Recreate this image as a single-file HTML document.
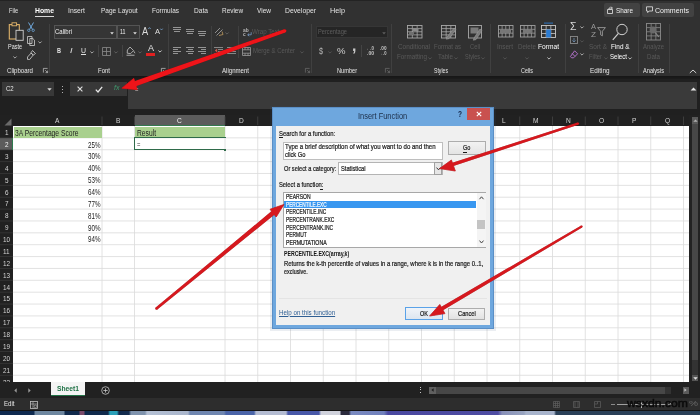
<!DOCTYPE html>
<html><head><meta charset="utf-8"><title>Insert Function</title>
<style>
html,body{margin:0;padding:0;background:#1c1c1c;}
#r{position:relative;width:700px;height:415px;overflow:hidden;font-family:"Liberation Sans",sans-serif;}
#r div{position:absolute;box-sizing:border-box;}
#r span{position:absolute;white-space:nowrap;transform-origin:0 50%;}
#r svg{position:absolute;overflow:visible;}
</style></head><body><div id="r">
<!-- s1_ribbon.py -->
<div style="left:0px;top:0px;width:700px;height:75.6px;background:#313131;"></div>
<div style="left:0px;top:75.6px;width:700px;height:40px;background:#202020;"></div>
<div style="left:0px;top:75.6px;width:700px;height:3px;background:linear-gradient(#161616,#1c1c1c);"></div>
<div style="left:0px;top:0px;width:700px;height:1.2px;background:#232323;"></div>
<span style="left:9px;top:5.90px;font-size:8px;line-height:9.2px;color:#e2e2e2;transform:scaleX(0.714);">File</span>
<span style="left:68px;top:5.90px;font-size:8px;line-height:9.2px;color:#e2e2e2;transform:scaleX(0.850);">Insert</span>
<span style="left:100.7px;top:5.90px;font-size:8px;line-height:9.2px;color:#e2e2e2;transform:scaleX(0.815);">Page Layout</span>
<span style="left:152px;top:5.90px;font-size:8px;line-height:9.2px;color:#e2e2e2;transform:scaleX(0.810);">Formulas</span>
<span style="left:194px;top:5.90px;font-size:8px;line-height:9.2px;color:#e2e2e2;transform:scaleX(0.828);">Data</span>
<span style="left:222px;top:5.90px;font-size:8px;line-height:9.2px;color:#e2e2e2;transform:scaleX(0.801);">Review</span>
<span style="left:257px;top:5.90px;font-size:8px;line-height:9.2px;color:#e2e2e2;transform:scaleX(0.814);">View</span>
<span style="left:285px;top:5.90px;font-size:8px;line-height:9.2px;color:#e2e2e2;transform:scaleX(0.850);">Developer</span>
<span style="left:330px;top:5.90px;font-size:8px;line-height:9.2px;color:#e2e2e2;transform:scaleX(0.912);">Help</span>
<span style="left:35px;top:5.90px;font-size:8px;line-height:9.2px;color:#ffffff;font-weight:bold;transform:scaleX(0.855);">Home</span>
<div style="left:35px;top:15.5px;width:19px;height:1.5px;background:#d8d8d8;"></div>
<div style="left:603.5px;top:2.5px;width:36px;height:14.5px;background:#424242;border-radius:2px;"></div>
<div style="left:642px;top:2.5px;width:52px;height:14.5px;background:#424242;border-radius:2px;"></div>
<span style="left:616px;top:5.70px;font-size:8px;line-height:9.2px;color:#f0f0f0;transform:scaleX(0.796);">Share</span>
<span style="left:655px;top:5.70px;font-size:8px;line-height:9.2px;color:#f0f0f0;transform:scaleX(0.879);">Comments</span>
<svg style="left:607px;top:6px" width="7" height="8" viewBox="0 0 7 8"><path d="M0.5 3.5h5v4h-5z M2 3.5v-1.5h3.2 M4 0.6l1.4 1.4-1.4 1.4" fill="none" stroke="#e6e6e6" stroke-width="0.8"/></svg>
<svg style="left:646px;top:6px" width="7" height="8" viewBox="0 0 7 8"><path d="M0.5 0.8h6v4.2h-3.4l-1.4 1.6v-1.6h-1.2z" fill="none" stroke="#e6e6e6" stroke-width="0.8"/></svg>
<div style="left:48.8px;top:24px;width:1px;height:49px;background:#404040;"></div>
<div style="left:167.5px;top:24px;width:1px;height:49px;background:#404040;"></div>
<div style="left:311px;top:24px;width:1px;height:49px;background:#404040;"></div>
<div style="left:391px;top:24px;width:1px;height:49px;background:#404040;"></div>
<div style="left:490px;top:24px;width:1px;height:49px;background:#404040;"></div>
<div style="left:564.5px;top:24px;width:1px;height:49px;background:#404040;"></div>
<div style="left:637.5px;top:24px;width:1px;height:49px;background:#404040;"></div>
<div style="left:669px;top:24px;width:1px;height:49px;background:#404040;"></div>
<div style="left:210.5px;top:26px;width:1px;height:32px;background:#404040;"></div>
<div style="left:238px;top:26px;width:1px;height:32px;background:#404040;"></div>
<span style="left:7px;top:66.59px;font-size:7.5px;line-height:8.62px;color:#e6e6e6;transform:scaleX(0.810);">Clipboard</span>
<span style="left:98px;top:66.59px;font-size:7.5px;line-height:8.62px;color:#e6e6e6;transform:scaleX(0.800);">Font</span>
<span style="left:222px;top:66.59px;font-size:7.5px;line-height:8.62px;color:#e6e6e6;transform:scaleX(0.810);">Alignment</span>
<span style="left:337px;top:66.59px;font-size:7.5px;line-height:8.62px;color:#e6e6e6;transform:scaleX(0.750);">Number</span>
<span style="left:433.9px;top:66.59px;font-size:7.5px;line-height:8.62px;color:#e6e6e6;transform:scaleX(0.685);">Styles</span>
<span style="left:521px;top:66.59px;font-size:7.5px;line-height:8.62px;color:#e6e6e6;transform:scaleX(0.720);">Cells</span>
<span style="left:590px;top:66.59px;font-size:7.5px;line-height:8.62px;color:#e6e6e6;transform:scaleX(0.850);">Editing</span>
<span style="left:643px;top:66.59px;font-size:7.5px;line-height:8.62px;color:#e6e6e6;transform:scaleX(0.752);">Analysis</span>
<svg style="left:42.5px;top:68.3px" width="5" height="5" viewBox="0 0 5 5"><path d="M0.4 4.6v-4.2h4.2 M2.2 2.2l2.2 2.2 M4.6 2.6v2h-2" fill="none" stroke="#c8c8c8" stroke-width="0.7"/></svg>
<svg style="left:160.5px;top:68.3px" width="5" height="5" viewBox="0 0 5 5"><path d="M0.4 4.6v-4.2h4.2 M2.2 2.2l2.2 2.2 M4.6 2.6v2h-2" fill="none" stroke="#c8c8c8" stroke-width="0.7"/></svg>
<svg style="left:304.5px;top:68.3px" width="5" height="5" viewBox="0 0 5 5"><path d="M0.4 4.6v-4.2h4.2 M2.2 2.2l2.2 2.2 M4.6 2.6v2h-2" fill="none" stroke="#707070" stroke-width="0.7"/></svg>
<svg style="left:384.5px;top:68.3px" width="5" height="5" viewBox="0 0 5 5"><path d="M0.4 4.6v-4.2h4.2 M2.2 2.2l2.2 2.2 M4.6 2.6v2h-2" fill="none" stroke="#707070" stroke-width="0.7"/></svg>
<svg style="left:689px;top:68.5px" width="8" height="5" viewBox="0 0 8 5"><path d="M0.8 4l3.2-3 3.2 3" fill="none" stroke="#d0d0d0" stroke-width="1"/></svg>
<svg style="left:8px;top:21px" width="17" height="21" viewBox="0 0 17 21"><rect x="1.3" y="3.6" width="10" height="14.4" fill="none" stroke="#e0b36a" stroke-width="1.1"/>
<rect x="4" y="1.8" width="4.6" height="3" fill="#313131" stroke="#e0b36a" stroke-width="0.9"/>
<rect x="8" y="9.3" width="7.2" height="10" fill="#313131" stroke="#cfcfcf" stroke-width="0.9"/></svg>
<span style="left:8px;top:43.49px;font-size:7.5px;line-height:8.62px;color:#e8e8e8;transform:scaleX(0.730);">Paste</span>
<svg style="left:13px;top:55.5px" width="4" height="3" viewBox="0 0 4 3"><path d="M0.4 0.5l1.6 1.6 1.6-1.6" fill="none" stroke="#c8c8c8" stroke-width="0.8"/></svg>
<svg style="left:27px;top:22px" width="8" height="10" viewBox="0 0 8 10"><path d="M1.5 0.5l4 7 M6.5 0.5l-4 7" stroke="#6fa8dc" stroke-width="1" fill="none"/><circle cx="1.8" cy="8.3" r="1.2" fill="none" stroke="#6fa8dc" stroke-width="0.8"/><circle cx="6.2" cy="8.3" r="1.2" fill="none" stroke="#6fa8dc" stroke-width="0.8"/></svg>
<svg style="left:27px;top:36px" width="9" height="10" viewBox="0 0 9 10"><path d="M0.5 0.5h4.5v7h-4.5z M2.8 2.5h3l1.7 1.7v5.3h-4.7z" fill="#313131" stroke="#d0d0d0" stroke-width="0.8"/></svg>
<svg style="left:38px;top:40.5px" width="4" height="3" viewBox="0 0 4 3"><path d="M0.4 0.5l1.6 1.6 1.6-1.6" fill="none" stroke="#c8c8c8" stroke-width="0.8"/></svg>
<svg style="left:27px;top:50px" width="9" height="10" viewBox="0 0 9 10"><path d="M5.5 0.5l3 3-2.2 1.6-2.3-2.3z M4.2 3l2 2-3.4 4.4h-2.3v-2.4z" fill="none" stroke="#d0d0d0" stroke-width="0.8"/></svg>
<div style="left:53.5px;top:25px;width:63px;height:13.5px;background:#353535;border:1px solid #545454;"></div>
<div style="left:117px;top:25px;width:22.5px;height:13.5px;background:#353535;border:1px solid #545454;"></div>
<span style="left:55px;top:27.89px;font-size:7.5px;line-height:8.62px;color:#f0f0f0;transform:scaleX(0.800);">Calibri</span>
<span style="left:120px;top:27.69px;font-size:7.5px;line-height:8.62px;color:#f0f0f0;transform:scaleX(0.706);">11</span>
<svg style="left:110px;top:31.5px" width="4" height="3" viewBox="0 0 4 3"><path d="M0.2 0.3h3.6l-1.8 2.2z" fill="#e0e0e0"/></svg>
<svg style="left:133px;top:31.5px" width="4" height="3" viewBox="0 0 4 3"><path d="M0.2 0.3h3.6l-1.8 2.2z" fill="#e0e0e0"/></svg>
<span style="left:142.3px;top:25.16px;font-size:10.5px;line-height:12.07px;color:#dcdcdc;transform:scaleX(0.885);">A</span>
<svg style="left:148px;top:27px" width="3" height="3" viewBox="0 0 3 3"><path d="M0.3 2l1.2-1.4 1.2 1.4" fill="none" stroke="#7fb2e5" stroke-width="0.7"/></svg>
<span style="left:154.5px;top:27.40px;font-size:8px;line-height:9.2px;color:#e0e0e0;transform:scaleX(0.937);">A</span>
<svg style="left:159.5px;top:27.5px" width="3" height="3" viewBox="0 0 3 3"><path d="M0.3 0.6l1.2 1.4 1.2-1.4" fill="none" stroke="#7fb2e5" stroke-width="0.7"/></svg>
<span style="left:56.5px;top:46.69px;font-size:7.5px;line-height:8.62px;color:#e0e0e0;font-weight:bold;transform:scaleX(0.738);">B</span>
<span style="left:69.5px;top:46.69px;font-size:7.5px;line-height:8.62px;color:#e0e0e0;transform:scaleX(1.200);font-style:italic;">I</span>
<span style="left:80.5px;top:46.69px;font-size:7.5px;line-height:8.62px;color:#e0e0e0;transform:scaleX(0.923);text-decoration:underline;">U</span>
<svg style="left:90px;top:50.5px" width="4" height="3" viewBox="0 0 4 3"><path d="M0.4 0.5l1.6 1.6 1.6-1.6" fill="none" stroke="#c8c8c8" stroke-width="0.8"/></svg>
<div style="left:97.5px;top:45px;width:1px;height:12px;background:#444;"></div>
<svg style="left:102px;top:46.5px" width="9" height="9" viewBox="0 0 9 9"><path d="M0.5 0.5h8v8h-8z M4.5 0.5v8 M0.5 4.5h8" fill="none" stroke="#8a8a8a" stroke-width="0.8"/></svg>
<svg style="left:114px;top:50.5px" width="4" height="3" viewBox="0 0 4 3"><path d="M0.4 0.5l1.6 1.6 1.6-1.6" fill="none" stroke="#6a6a6a" stroke-width="0.8"/></svg>
<div style="left:121.5px;top:45px;width:1px;height:12px;background:#444;"></div>
<svg style="left:125.5px;top:45.5px" width="10" height="10" viewBox="0 0 10 10"><path d="M4 1l3.6 3.6-3 3-3.4-0.4 0.2-3.2z M7.8 5.2l1.2 2" fill="none" stroke="#c8c8c8" stroke-width="0.8"/><rect x="0.5" y="8.6" width="8" height="1.4" fill="#8a8a8a"/></svg>
<svg style="left:138px;top:50.5px" width="4" height="3" viewBox="0 0 4 3"><path d="M0.4 0.5l1.6 1.6 1.6-1.6" fill="none" stroke="#6a6a6a" stroke-width="0.8"/></svg>
<span style="left:147.6px;top:43.91px;font-size:8.5px;line-height:9.77px;color:#e6e6e6;transform:scaleX(1.058);">A</span>
<div style="left:146.2px;top:53.3px;width:8.8px;height:2.4px;background:#e02020;"></div>
<svg style="left:157.5px;top:50.3px" width="4" height="3" viewBox="0 0 4 3"><path d="M0.4 0.5l1.6 1.6 1.6-1.6" fill="none" stroke="#f0f0f0" stroke-width="0.8"/></svg>
<div style="left:173.0px;top:27px;width:8px;height:0.9px;background:#949494;"></div>
<div style="left:173.0px;top:29px;width:8px;height:0.9px;background:#949494;"></div>
<div style="left:174.0px;top:31px;width:6px;height:0.9px;background:#949494;"></div>
<div style="left:186.0px;top:28.5px;width:8px;height:0.9px;background:#949494;"></div>
<div style="left:186.0px;top:30.5px;width:8px;height:0.9px;background:#949494;"></div>
<div style="left:187.0px;top:32.5px;width:6px;height:0.9px;background:#949494;"></div>
<div style="left:198.0px;top:30.8px;width:8px;height:0.9px;background:#949494;"></div>
<div style="left:198.0px;top:32.8px;width:8px;height:0.9px;background:#949494;"></div>
<div style="left:199.0px;top:34.8px;width:6px;height:0.9px;background:#949494;"></div>
<div style="left:173.0px;top:46.5px;width:8px;height:0.9px;background:#949494;"></div>
<div style="left:173.0px;top:48.5px;width:5px;height:0.9px;background:#949494;"></div>
<div style="left:173.0px;top:50.5px;width:8px;height:0.9px;background:#949494;"></div>
<div style="left:173.0px;top:52.5px;width:5px;height:0.9px;background:#949494;"></div>
<div style="left:186.0px;top:46.5px;width:8px;height:0.9px;background:#949494;"></div>
<div style="left:187.5px;top:48.5px;width:5px;height:0.9px;background:#949494;"></div>
<div style="left:186.0px;top:50.5px;width:8px;height:0.9px;background:#949494;"></div>
<div style="left:187.5px;top:52.5px;width:5px;height:0.9px;background:#949494;"></div>
<div style="left:198.0px;top:46.5px;width:8px;height:0.9px;background:#949494;"></div>
<div style="left:201.0px;top:48.5px;width:5px;height:0.9px;background:#949494;"></div>
<div style="left:198.0px;top:50.5px;width:8px;height:0.9px;background:#949494;"></div>
<div style="left:201.0px;top:52.5px;width:5px;height:0.9px;background:#949494;"></div>
<svg style="left:213.5px;top:26.5px" width="10" height="10" viewBox="0 0 10 10"><path d="M1 6l5-5 M2.5 8.5l6-6" stroke="#9a9a9a" stroke-width="0.9" fill="none"/><path d="M5 8.5l4-1-1 -3" stroke="#b0905a" stroke-width="0.9" fill="none"/></svg>
<svg style="left:224.5px;top:31.5px" width="4" height="3" viewBox="0 0 4 3"><path d="M0.4 0.5l1.6 1.6 1.6-1.6" fill="none" stroke="#6a6a6a" stroke-width="0.8"/></svg>
<div style="left:214.0px;top:46.5px;width:9px;height:0.9px;background:#868686;"></div>
<div style="left:218.0px;top:48.5px;width:5px;height:0.9px;background:#868686;"></div>
<div style="left:218.0px;top:50.5px;width:5px;height:0.9px;background:#868686;"></div>
<div style="left:214.0px;top:52.5px;width:9px;height:0.9px;background:#868686;"></div>
<div style="left:226.5px;top:46.5px;width:9px;height:0.9px;background:#868686;"></div>
<div style="left:230.5px;top:48.5px;width:5px;height:0.9px;background:#868686;"></div>
<div style="left:230.5px;top:50.5px;width:5px;height:0.9px;background:#868686;"></div>
<div style="left:226.5px;top:52.5px;width:9px;height:0.9px;background:#868686;"></div>
<svg style="left:213.5px;top:48px" width="4" height="5" viewBox="0 0 4 5"><path d="M3.2 0.6l-2.4 1.9 2.4 1.9z" fill="#c85a4a"/></svg>
<svg style="left:226px;top:48px" width="4" height="5" viewBox="0 0 4 5"><path d="M0.8 0.6l2.4 1.9-2.4 1.9z" fill="#c85a4a"/></svg>
<span style="left:243.3px;top:26.61px;font-size:5.2px;line-height:5.98px;color:#b4b4b4;font-weight:bold;transform:scaleX(0.939);">ab</span>
<span style="left:243.3px;top:31.21px;font-size:5.2px;line-height:5.98px;color:#b4b4b4;font-weight:bold;transform:scaleX(0.934);">c</span>
<svg style="left:246.5px;top:31.5px" width="5" height="5" viewBox="0 0 5 5"><path d="M4.2 0.2v2.6h-3.4 M2.2 1.4l-1.5 1.4 1.5 1.4" stroke="#7fa8d8" stroke-width="0.7" fill="none"/></svg>
<span style="left:252.4px;top:27.69px;font-size:7.5px;line-height:8.62px;color:#595959;transform:scaleX(0.824);">Wrap Text</span>
<svg style="left:242px;top:46.5px" width="9" height="9" viewBox="0 0 9 9"><path d="M0.5 0.5h8v8h-8z M0.5 2.8h8 M0.5 6.2h8 M3 0.5v2.3 M6 0.5v2.3 M3 6.2v2.3 M6 6.2v2.3" stroke="#9a9a9a" stroke-width="0.8" fill="none"/></svg>
<span style="left:253px;top:47.19px;font-size:7.5px;line-height:8.62px;color:#595959;transform:scaleX(0.793);">Merge &amp; Center</span>
<svg style="left:300px;top:51px" width="4" height="3" viewBox="0 0 4 3"><path d="M0.4 0.5l1.6 1.6 1.6-1.6" fill="none" stroke="#5a5a5a" stroke-width="0.8"/></svg>
<div style="left:316px;top:25.5px;width:71.5px;height:12.5px;background:#252525;border:1px solid #363636;"></div>
<span style="left:318px;top:27.89px;font-size:7.5px;line-height:8.62px;color:#5e5e5e;transform:scaleX(0.756);">Percentage</span>
<svg style="left:381.5px;top:31.5px" width="4" height="3" viewBox="0 0 4 3"><path d="M0.2 0.3h3.6l-1.8 2.2z" fill="#5e5e5e"/></svg>
<span style="left:319.2px;top:45.83px;font-size:9px;line-height:10.35px;color:#b8b8b8;transform:scaleX(0.799);">$</span>
<svg style="left:328px;top:51px" width="4" height="3" viewBox="0 0 4 3"><path d="M0.4 0.5l1.6 1.6 1.6-1.6" fill="none" stroke="#5a5a5a" stroke-width="0.8"/></svg>
<span style="left:337px;top:45.54px;font-size:9.5px;line-height:10.92px;color:#d0d0d0;transform:scaleX(1.006);">%</span>
<span style="left:351.6px;top:36.43px;font-size:17px;line-height:19.55px;color:#c8c8c8;font-weight:bold;transform:scaleX(0.932);">,</span>
<div style="left:360.5px;top:45px;width:1px;height:12px;background:#444;"></div>
<span style="left:365.5px;top:45.95px;font-size:4.6px;line-height:5.29px;color:#c8c8c8;font-weight:bold;transform:scaleX(0.948);">←.0</span>
<span style="left:366.5px;top:50.55px;font-size:4.6px;line-height:5.29px;color:#c8c8c8;font-weight:bold;transform:scaleX(1.095);">.00</span>
<span style="left:379.5px;top:45.95px;font-size:4.6px;line-height:5.29px;color:#c8c8c8;font-weight:bold;transform:scaleX(1.016);">.00</span>
<span style="left:378.5px;top:50.55px;font-size:4.6px;line-height:5.29px;color:#c8c8c8;font-weight:bold;transform:scaleX(0.889);">→.0</span>
<svg style="left:406.5px;top:24.5px" width="15.5" height="13.5" viewBox="0 0 15.5 13.5"><rect x="0.5" y="0.5" width="14.5" height="12.5" fill="none" stroke="#a8a8a8" stroke-width="0.9"/><path d="M5.33 0.5v12.5" stroke="#a8a8a8" stroke-width="0.8"/><path d="M10.17 0.5v12.5" stroke="#a8a8a8" stroke-width="0.8"/><path d="M0.5 3.62h14.5" stroke="#a8a8a8" stroke-width="0.8"/><path d="M0.5 6.75h14.5" stroke="#a8a8a8" stroke-width="0.8"/><path d="M0.5 9.88h14.5" stroke="#a8a8a8" stroke-width="0.8"/><rect x="5.5" y="3" width="6" height="3" fill="#8a8a8a"/><rect x="2" y="7" width="5" height="3" fill="#707070"/></svg>
<span style="left:398px;top:42.69px;font-size:7.5px;line-height:8.62px;color:#595959;transform:scaleX(0.853);">Conditional</span>
<span style="left:397px;top:52.69px;font-size:7.5px;line-height:8.62px;color:#595959;transform:scaleX(0.837);">Formatting</span>
<svg style="left:428px;top:56.5px" width="4" height="3" viewBox="0 0 4 3"><path d="M0.4 0.5l1.6 1.6 1.6-1.6" fill="none" stroke="#5a5a5a" stroke-width="0.8"/></svg>
<svg style="left:440.5px;top:24.5px" width="15" height="13.5" viewBox="0 0 15 13.5"><rect x="0.5" y="0.5" width="14" height="12.5" fill="none" stroke="#a8a8a8" stroke-width="0.9"/><path d="M5.17 0.5v12.5" stroke="#a8a8a8" stroke-width="0.8"/><path d="M9.83 0.5v12.5" stroke="#a8a8a8" stroke-width="0.8"/><path d="M0.5 3.62h14" stroke="#a8a8a8" stroke-width="0.8"/><path d="M0.5 6.75h14" stroke="#a8a8a8" stroke-width="0.8"/><path d="M0.5 9.88h14" stroke="#a8a8a8" stroke-width="0.8"/><path d="M6 12l7-9 2 1.6-7 9-2.6 0.6z" fill="#7a7a7a" stroke="#a0a0a0" stroke-width="0.6"/></svg>
<span style="left:434px;top:42.69px;font-size:7.5px;line-height:8.62px;color:#595959;transform:scaleX(0.800);">Format as</span>
<span style="left:438px;top:52.69px;font-size:7.5px;line-height:8.62px;color:#595959;transform:scaleX(0.837);">Table</span>
<svg style="left:454px;top:56.5px" width="4" height="3" viewBox="0 0 4 3"><path d="M0.4 0.5l1.6 1.6 1.6-1.6" fill="none" stroke="#5a5a5a" stroke-width="0.8"/></svg>
<svg style="left:468px;top:24.5px" width="14" height="13.5" viewBox="0 0 14 13.5"><rect x="0.5" y="0.5" width="13" height="12.5" fill="none" stroke="#a8a8a8" stroke-width="0.9"/><rect x="2.5" y="2.5" width="8" height="6" fill="#7a7a7a"/><path d="M6 13l6-9 2 1.6-6 9-2.6 0.6z" fill="#7a7a7a" stroke="#a0a0a0" stroke-width="0.6"/></svg>
<span style="left:470px;top:42.69px;font-size:7.5px;line-height:8.62px;color:#595959;transform:scaleX(0.774);">Cell</span>
<span style="left:465px;top:52.69px;font-size:7.5px;line-height:8.62px;color:#595959;transform:scaleX(0.734);">Styles</span>
<svg style="left:481px;top:56.5px" width="4" height="3" viewBox="0 0 4 3"><path d="M0.4 0.5l1.6 1.6 1.6-1.6" fill="none" stroke="#5a5a5a" stroke-width="0.8"/></svg>
<svg style="left:497.5px;top:25px" width="15.5" height="12.5" viewBox="0 0 15.5 12.5"><rect x="0.5" y="0.5" width="14.5" height="11.5" fill="none" stroke="#a0a0a0" stroke-width="0.9"/><path d="M4.12 0.5v11.5" stroke="#a0a0a0" stroke-width="0.8"/><path d="M7.75 0.5v11.5" stroke="#a0a0a0" stroke-width="0.8"/><path d="M11.38 0.5v11.5" stroke="#a0a0a0" stroke-width="0.8"/><path d="M0.5 4.33h14.5" stroke="#a0a0a0" stroke-width="0.8"/><path d="M0.5 8.17h14.5" stroke="#a0a0a0" stroke-width="0.8"/><rect x="2" y="4.5" width="11" height="3.6" fill="#777"/></svg>
<span style="left:497px;top:42.69px;font-size:7.5px;line-height:8.62px;color:#595959;transform:scaleX(0.853);">Insert</span>
<svg style="left:503px;top:56.5px" width="4" height="3" viewBox="0 0 4 3"><path d="M0.4 0.5l1.6 1.6 1.6-1.6" fill="none" stroke="#5a5a5a" stroke-width="0.8"/></svg>
<svg style="left:519.5px;top:25px" width="15.5" height="12.5" viewBox="0 0 15.5 12.5"><rect x="0.5" y="0.5" width="14.5" height="11.5" fill="none" stroke="#a0a0a0" stroke-width="0.9"/><path d="M4.12 0.5v11.5" stroke="#a0a0a0" stroke-width="0.8"/><path d="M7.75 0.5v11.5" stroke="#a0a0a0" stroke-width="0.8"/><path d="M11.38 0.5v11.5" stroke="#a0a0a0" stroke-width="0.8"/><path d="M0.5 4.33h14.5" stroke="#a0a0a0" stroke-width="0.8"/><path d="M0.5 8.17h14.5" stroke="#a0a0a0" stroke-width="0.8"/><rect x="3" y="4.5" width="9.5" height="3.6" fill="#777"/></svg>
<span style="left:518px;top:42.69px;font-size:7.5px;line-height:8.62px;color:#595959;transform:scaleX(0.830);">Delete</span>
<svg style="left:525px;top:56.5px" width="4" height="3" viewBox="0 0 4 3"><path d="M0.4 0.5l1.6 1.6 1.6-1.6" fill="none" stroke="#5a5a5a" stroke-width="0.8"/></svg>
<svg style="left:541.3px;top:24.5px" width="15" height="13" viewBox="0 0 15 13"><rect x="0.5" y="0.5" width="14" height="12" fill="none" stroke="#c8c8c8" stroke-width="0.9"/><path d="M5.17 0.5v12" stroke="#c8c8c8" stroke-width="0.8"/><path d="M9.83 0.5v12" stroke="#c8c8c8" stroke-width="0.8"/><path d="M0.5 4.50h14" stroke="#c8c8c8" stroke-width="0.8"/><path d="M0.5 8.50h14" stroke="#c8c8c8" stroke-width="0.8"/><rect x="5.2" y="4.5" width="4.7" height="8" fill="#2b7cd3"/><path d="M3 -1.9h9" stroke="#2b7cd3" stroke-width="0.9"/></svg>
<span style="left:538px;top:42.69px;font-size:7.5px;line-height:8.62px;color:#ffffff;transform:scaleX(0.884);">Format</span>
<svg style="left:546.5px;top:56.5px" width="4" height="3" viewBox="0 0 4 3"><path d="M0.4 0.5l1.6 1.6 1.6-1.6" fill="none" stroke="#e0e0e0" stroke-width="0.8"/></svg>
<span style="left:570px;top:20.75px;font-size:10px;line-height:11.5px;color:#d8d8d8;transform:scaleX(1.051);">Σ</span>
<svg style="left:580px;top:25.5px" width="4" height="3" viewBox="0 0 4 3"><path d="M0.4 0.5l1.6 1.6 1.6-1.6" fill="none" stroke="#c8c8c8" stroke-width="0.8"/></svg>
<svg style="left:569.5px;top:36px" width="8" height="8" viewBox="0 0 8 8"><rect x="0.5" y="0.5" width="7" height="7" fill="none" stroke="#8a8a8a" stroke-width="0.9"/><path d="M4 2v4 M2.4 4.4l1.6 1.6 1.6-1.6" stroke="#6f8fb0" stroke-width="0.8" fill="none"/></svg>
<svg style="left:580px;top:39.5px" width="4" height="3" viewBox="0 0 4 3"><path d="M0.4 0.5l1.6 1.6 1.6-1.6" fill="none" stroke="#5a5a5a" stroke-width="0.8"/></svg>
<svg style="left:569.5px;top:49.5px" width="8" height="8" viewBox="0 0 8 8"><path d="M4.6 0.8l3 3-4 4h-2l-1.2-1.2z M2 3.4l3 3" fill="none" stroke="#b070c8" stroke-width="1"/></svg>
<svg style="left:580px;top:53px" width="4" height="3" viewBox="0 0 4 3"><path d="M0.4 0.5l1.6 1.6 1.6-1.6" fill="none" stroke="#c8c8c8" stroke-width="0.8"/></svg>
<span style="left:590.5px;top:23.48px;font-size:7px;line-height:8.05px;color:#9a9a9a;transform:scaleX(1.071);">A</span>
<span style="left:590.5px;top:30.98px;font-size:7px;line-height:8.05px;color:#9a9a9a;transform:scaleX(1.169);">Z</span>
<svg style="left:596.5px;top:26.5px" width="9" height="10" viewBox="0 0 9 10"><path d="M0.6 0.6h7.8l-3 3.6v4.6l-1.8-1v-3.6z" fill="none" stroke="#9a9a9a" stroke-width="0.9"/></svg>
<span style="left:589px;top:42.69px;font-size:7.5px;line-height:8.62px;color:#595959;transform:scaleX(0.864);">Sort &amp;</span>
<span style="left:589px;top:52.69px;font-size:7.5px;line-height:8.62px;color:#595959;transform:scaleX(0.780);">Filter</span>
<svg style="left:604px;top:56.5px" width="4" height="3" viewBox="0 0 4 3"><path d="M0.4 0.5l1.6 1.6 1.6-1.6" fill="none" stroke="#5a5a5a" stroke-width="0.8"/></svg>
<svg style="left:612px;top:22.5px" width="16" height="18" viewBox="0 0 16 18"><circle cx="10" cy="6.5" r="5.2" fill="none" stroke="#d0d0d0" stroke-width="1"/><path d="M6.4 10.4l-5.6 6.4" stroke="#d0d0d0" stroke-width="1.2"/></svg>
<span style="left:611px;top:42.69px;font-size:7.5px;line-height:8.62px;color:#ffffff;transform:scaleX(0.853);">Find &amp;</span>
<span style="left:610px;top:52.69px;font-size:7.5px;line-height:8.62px;color:#ffffff;transform:scaleX(0.816);">Select</span>
<svg style="left:628px;top:56.5px" width="4" height="3" viewBox="0 0 4 3"><path d="M0.4 0.5l1.6 1.6 1.6-1.6" fill="none" stroke="#e0e0e0" stroke-width="0.8"/></svg>
<svg style="left:645.5px;top:23px" width="15" height="17.5" viewBox="0 0 15 17.5"><rect x="0.5" y="0.5" width="14" height="16.5" fill="none" stroke="#8a8a8a" stroke-width="0.9"/><path d="M5.17 0.5v16.5" stroke="#8a8a8a" stroke-width="0.8"/><path d="M9.83 0.5v16.5" stroke="#8a8a8a" stroke-width="0.8"/><path d="M0.5 4.62h14" stroke="#8a8a8a" stroke-width="0.8"/><path d="M0.5 8.75h14" stroke="#8a8a8a" stroke-width="0.8"/><path d="M0.5 12.88h14" stroke="#8a8a8a" stroke-width="0.8"/><circle cx="7" cy="7" r="3.4" fill="#6a6a6a"/><path d="M9.4 9.6l3.4 4.4" stroke="#8a8a8a" stroke-width="1.1"/></svg>
<span style="left:643px;top:42.69px;font-size:7.5px;line-height:8.62px;color:#595959;transform:scaleX(0.787);">Analyze</span>
<span style="left:647px;top:52.69px;font-size:7.5px;line-height:8.62px;color:#595959;transform:scaleX(0.821);">Data</span>
<!-- s2_formula.py -->
<div style="left:2.2px;top:81.8px;width:52.3px;height:14.6px;background:#383838;"></div>
<span style="left:6.3px;top:85.49px;font-size:7.5px;line-height:8.62px;color:#e8e8e8;transform:scaleX(0.803);">C2</span>
<svg style="left:46.5px;top:87.5px" width="5" height="3" viewBox="0 0 5 3"><path d="M0.3 0.3h4.4l-2.2 2.4z" fill="#d8d8d8"/></svg>
<div style="left:61.5px;top:85.5px;width:1px;height:1px;background:#b0b0b0;"></div>
<div style="left:61.5px;top:88.5px;width:1px;height:1px;background:#b0b0b0;"></div>
<div style="left:61.5px;top:91.5px;width:1px;height:1px;background:#b0b0b0;"></div>
<div style="left:70.3px;top:81.8px;width:56.7px;height:14.6px;background:#383838;"></div>
<svg style="left:77px;top:86px" width="6" height="6" viewBox="0 0 6 6"><path d="M0.6 0.6l4.8 4.8 M5.4 0.6l-4.8 4.8" stroke="#e0e0e0" stroke-width="1.1" fill="none"/></svg>
<svg style="left:95px;top:85.5px" width="8" height="7" viewBox="0 0 8 7"><path d="M0.8 3.6l2.2 2.4 4.2-5.2" stroke="#e8e8e8" stroke-width="1.3" fill="none"/></svg>
<span style="left:113.5px;top:84.19px;font-size:7.5px;line-height:8.62px;color:#3f9b6e;transform:scaleX(0.943);font-style:italic;font-family:"Liberation Serif",serif;">fx</span>
<div style="left:128px;top:81.6px;width:569px;height:27.2px;background:#3a3a3a;"></div>
<svg style="left:689.5px;top:86.5px" width="7" height="4" viewBox="0 0 7 4"><path d="M0.6 3.6l2.9-3 2.9 3z" fill="#e8e8e8"/></svg>
<span style="left:135px;top:85.89px;font-size:7.5px;line-height:8.62px;color:#d8d8d8;transform:scaleX(0.776);">=</span>
<!-- s3_grid.py -->
<div style="left:0px;top:115px;width:700px;height:11px;background:#212121;"></div>
<div style="left:0px;top:126px;width:13px;height:256px;background:#212121;"></div>
<svg style="left:4px;top:117.5px" width="8" height="8" viewBox="0 0 8 8"><path d="M7.5 0.5v7h-7z" fill="#6a6a6a"/></svg>
<div style="left:13px;top:126px;width:676px;height:256px;background:#ffffff;"></div>
<div style="left:134.5px;top:115px;width:90.5px;height:11px;background:#5c5c5c;"></div>
<div style="left:0px;top:137.87px;width:13px;height:11.87px;background:#5c5c5c;"></div>
<svg style="left:0px;top:0px" width="700" height="415" viewBox="0 0 700 415"><path d="M102 126V382" stroke="#dadada" stroke-width="0.8"/><path d="M102 116.5V125" stroke="#454545" stroke-width="0.8"/><path d="M134.5 126V382" stroke="#dadada" stroke-width="0.8"/><path d="M134.5 116.5V125" stroke="#454545" stroke-width="0.8"/><path d="M225 126V382" stroke="#dadada" stroke-width="0.8"/><path d="M225 116.5V125" stroke="#454545" stroke-width="0.8"/><path d="M257.75 126V382" stroke="#dadada" stroke-width="0.8"/><path d="M257.75 116.5V125" stroke="#454545" stroke-width="0.8"/><path d="M290.5 126V382" stroke="#dadada" stroke-width="0.8"/><path d="M290.5 116.5V125" stroke="#454545" stroke-width="0.8"/><path d="M323.25 126V382" stroke="#dadada" stroke-width="0.8"/><path d="M323.25 116.5V125" stroke="#454545" stroke-width="0.8"/><path d="M356.0 126V382" stroke="#dadada" stroke-width="0.8"/><path d="M356.0 116.5V125" stroke="#454545" stroke-width="0.8"/><path d="M388.75 126V382" stroke="#dadada" stroke-width="0.8"/><path d="M388.75 116.5V125" stroke="#454545" stroke-width="0.8"/><path d="M421.5 126V382" stroke="#dadada" stroke-width="0.8"/><path d="M421.5 116.5V125" stroke="#454545" stroke-width="0.8"/><path d="M454.25 126V382" stroke="#dadada" stroke-width="0.8"/><path d="M454.25 116.5V125" stroke="#454545" stroke-width="0.8"/><path d="M487.0 126V382" stroke="#dadada" stroke-width="0.8"/><path d="M487.0 116.5V125" stroke="#454545" stroke-width="0.8"/><path d="M519.75 126V382" stroke="#dadada" stroke-width="0.8"/><path d="M519.75 116.5V125" stroke="#454545" stroke-width="0.8"/><path d="M552.5 126V382" stroke="#dadada" stroke-width="0.8"/><path d="M552.5 116.5V125" stroke="#454545" stroke-width="0.8"/><path d="M585.25 126V382" stroke="#dadada" stroke-width="0.8"/><path d="M585.25 116.5V125" stroke="#454545" stroke-width="0.8"/><path d="M618.0 126V382" stroke="#dadada" stroke-width="0.8"/><path d="M618.0 116.5V125" stroke="#454545" stroke-width="0.8"/><path d="M650.75 126V382" stroke="#dadada" stroke-width="0.8"/><path d="M650.75 116.5V125" stroke="#454545" stroke-width="0.8"/><path d="M683.5 126V382" stroke="#dadada" stroke-width="0.8"/><path d="M683.5 116.5V125" stroke="#454545" stroke-width="0.8"/><path d="M13 137.87H689" stroke="#dadada" stroke-width="0.8"/><path d="M0 137.87H13" stroke="#3c3c3c" stroke-width="0.7"/><path d="M13 149.74H689" stroke="#dadada" stroke-width="0.8"/><path d="M0 149.74H13" stroke="#3c3c3c" stroke-width="0.7"/><path d="M13 161.61H689" stroke="#dadada" stroke-width="0.8"/><path d="M0 161.61H13" stroke="#3c3c3c" stroke-width="0.7"/><path d="M13 173.48H689" stroke="#dadada" stroke-width="0.8"/><path d="M0 173.48H13" stroke="#3c3c3c" stroke-width="0.7"/><path d="M13 185.35H689" stroke="#dadada" stroke-width="0.8"/><path d="M0 185.35H13" stroke="#3c3c3c" stroke-width="0.7"/><path d="M13 197.22H689" stroke="#dadada" stroke-width="0.8"/><path d="M0 197.22H13" stroke="#3c3c3c" stroke-width="0.7"/><path d="M13 209.09H689" stroke="#dadada" stroke-width="0.8"/><path d="M0 209.09H13" stroke="#3c3c3c" stroke-width="0.7"/><path d="M13 220.96H689" stroke="#dadada" stroke-width="0.8"/><path d="M0 220.96H13" stroke="#3c3c3c" stroke-width="0.7"/><path d="M13 232.83H689" stroke="#dadada" stroke-width="0.8"/><path d="M0 232.83H13" stroke="#3c3c3c" stroke-width="0.7"/><path d="M13 244.70H689" stroke="#dadada" stroke-width="0.8"/><path d="M0 244.70H13" stroke="#3c3c3c" stroke-width="0.7"/><path d="M13 256.57H689" stroke="#dadada" stroke-width="0.8"/><path d="M0 256.57H13" stroke="#3c3c3c" stroke-width="0.7"/><path d="M13 268.44H689" stroke="#dadada" stroke-width="0.8"/><path d="M0 268.44H13" stroke="#3c3c3c" stroke-width="0.7"/><path d="M13 280.31H689" stroke="#dadada" stroke-width="0.8"/><path d="M0 280.31H13" stroke="#3c3c3c" stroke-width="0.7"/><path d="M13 292.18H689" stroke="#dadada" stroke-width="0.8"/><path d="M0 292.18H13" stroke="#3c3c3c" stroke-width="0.7"/><path d="M13 304.05H689" stroke="#dadada" stroke-width="0.8"/><path d="M0 304.05H13" stroke="#3c3c3c" stroke-width="0.7"/><path d="M13 315.92H689" stroke="#dadada" stroke-width="0.8"/><path d="M0 315.92H13" stroke="#3c3c3c" stroke-width="0.7"/><path d="M13 327.79H689" stroke="#dadada" stroke-width="0.8"/><path d="M0 327.79H13" stroke="#3c3c3c" stroke-width="0.7"/><path d="M13 339.66H689" stroke="#dadada" stroke-width="0.8"/><path d="M0 339.66H13" stroke="#3c3c3c" stroke-width="0.7"/><path d="M13 351.53H689" stroke="#dadada" stroke-width="0.8"/><path d="M0 351.53H13" stroke="#3c3c3c" stroke-width="0.7"/><path d="M13 363.40H689" stroke="#dadada" stroke-width="0.8"/><path d="M0 363.40H13" stroke="#3c3c3c" stroke-width="0.7"/><path d="M13 375.27H689" stroke="#dadada" stroke-width="0.8"/><path d="M0 375.27H13" stroke="#3c3c3c" stroke-width="0.7"/></svg>
<span style="left:55.298796875px;top:117.09px;font-size:7.5px;line-height:8.62px;color:#d4d4d4;transform:scaleX(0.880);">A</span>
<span style="left:116.048796875px;top:117.09px;font-size:7.5px;line-height:8.62px;color:#d4d4d4;transform:scaleX(0.880);">B</span>
<span style="left:177.36678125px;top:117.09px;font-size:7.5px;line-height:8.62px;color:#f4f4f4;transform:scaleX(0.880);">C</span>
<span style="left:238.99178125px;top:117.09px;font-size:7.5px;line-height:8.62px;color:#d4d4d4;transform:scaleX(0.880);">D</span>
<span style="left:271.923796875px;top:117.09px;font-size:7.5px;line-height:8.62px;color:#d4d4d4;transform:scaleX(0.880);">E</span>
<span style="left:304.8591640625px;top:117.09px;font-size:7.5px;line-height:8.62px;color:#d4d4d4;transform:scaleX(0.880);">F</span>
<span style="left:337.05821875px;top:117.09px;font-size:7.5px;line-height:8.62px;color:#d4d4d4;transform:scaleX(0.880);">G</span>
<span style="left:369.99178125px;top:117.09px;font-size:7.5px;line-height:8.62px;color:#d4d4d4;transform:scaleX(0.880);">H</span>
<span style="left:404.20821875px;top:117.09px;font-size:7.5px;line-height:8.62px;color:#d4d4d4;transform:scaleX(0.880);">I</span>
<span style="left:436.225px;top:117.09px;font-size:7.5px;line-height:8.62px;color:#d4d4d4;transform:scaleX(0.880);">J</span>
<span style="left:468.423796875px;top:117.09px;font-size:7.5px;line-height:8.62px;color:#d4d4d4;transform:scaleX(0.880);">K</span>
<span style="left:501.5396328125px;top:117.09px;font-size:7.5px;line-height:8.62px;color:#d4d4d4;transform:scaleX(0.880);">L</span>
<span style="left:533.3759453125px;top:117.09px;font-size:7.5px;line-height:8.62px;color:#d4d4d4;transform:scaleX(0.880);">M</span>
<span style="left:566.49178125px;top:117.09px;font-size:7.5px;line-height:8.62px;color:#d4d4d4;transform:scaleX(0.880);">N</span>
<span style="left:599.05821875px;top:117.09px;font-size:7.5px;line-height:8.62px;color:#d4d4d4;transform:scaleX(0.880);">O</span>
<span style="left:632.173796875px;top:117.09px;font-size:7.5px;line-height:8.62px;color:#d4d4d4;transform:scaleX(0.880);">P</span>
<span style="left:664.55821875px;top:117.09px;font-size:7.5px;line-height:8.62px;color:#d4d4d4;transform:scaleX(0.880);">Q</span>
<span style="left:4.727202148437501px;top:129.22px;font-size:7.5px;line-height:8.62px;color:#d4d4d4;transform:scaleX(0.850);">1</span>
<span style="left:4.727202148437501px;top:141.09px;font-size:7.5px;line-height:8.62px;color:#f4f4f4;transform:scaleX(0.850);">2</span>
<span style="left:4.727202148437501px;top:152.97px;font-size:7.5px;line-height:8.62px;color:#d4d4d4;transform:scaleX(0.850);">3</span>
<span style="left:4.727202148437501px;top:164.83px;font-size:7.5px;line-height:8.62px;color:#d4d4d4;transform:scaleX(0.850);">4</span>
<span style="left:4.727202148437501px;top:176.70px;font-size:7.5px;line-height:8.62px;color:#d4d4d4;transform:scaleX(0.850);">5</span>
<span style="left:4.727202148437501px;top:188.57px;font-size:7.5px;line-height:8.62px;color:#d4d4d4;transform:scaleX(0.850);">6</span>
<span style="left:4.727202148437501px;top:200.44px;font-size:7.5px;line-height:8.62px;color:#d4d4d4;transform:scaleX(0.850);">7</span>
<span style="left:4.727202148437501px;top:212.31px;font-size:7.5px;line-height:8.62px;color:#d4d4d4;transform:scaleX(0.850);">8</span>
<span style="left:4.727202148437501px;top:224.18px;font-size:7.5px;line-height:8.62px;color:#d4d4d4;transform:scaleX(0.850);">9</span>
<span style="left:2.9544042968750004px;top:236.05px;font-size:7.5px;line-height:8.62px;color:#d4d4d4;transform:scaleX(0.850);">10</span>
<span style="left:3.1909765625px;top:247.92px;font-size:7.5px;line-height:8.62px;color:#d4d4d4;transform:scaleX(0.850);">11</span>
<span style="left:2.9544042968750004px;top:259.80px;font-size:7.5px;line-height:8.62px;color:#d4d4d4;transform:scaleX(0.850);">12</span>
<span style="left:2.9544042968750004px;top:271.67px;font-size:7.5px;line-height:8.62px;color:#d4d4d4;transform:scaleX(0.850);">13</span>
<span style="left:2.9544042968750004px;top:283.54px;font-size:7.5px;line-height:8.62px;color:#d4d4d4;transform:scaleX(0.850);">14</span>
<span style="left:2.9544042968750004px;top:295.41px;font-size:7.5px;line-height:8.62px;color:#d4d4d4;transform:scaleX(0.850);">15</span>
<span style="left:2.9544042968750004px;top:307.28px;font-size:7.5px;line-height:8.62px;color:#d4d4d4;transform:scaleX(0.850);">16</span>
<span style="left:2.9544042968750004px;top:319.15px;font-size:7.5px;line-height:8.62px;color:#d4d4d4;transform:scaleX(0.850);">17</span>
<span style="left:2.9544042968750004px;top:331.02px;font-size:7.5px;line-height:8.62px;color:#d4d4d4;transform:scaleX(0.850);">18</span>
<span style="left:2.9544042968750004px;top:342.89px;font-size:7.5px;line-height:8.62px;color:#d4d4d4;transform:scaleX(0.850);">19</span>
<span style="left:2.9544042968750004px;top:354.75px;font-size:7.5px;line-height:8.62px;color:#d4d4d4;transform:scaleX(0.850);">20</span>
<span style="left:2.9544042968750004px;top:366.62px;font-size:7.5px;line-height:8.62px;color:#d4d4d4;transform:scaleX(0.850);">21</span>
<span style="left:2.9544042968750004px;top:378.50px;font-size:7.5px;line-height:8.62px;color:#d4d4d4;transform:scaleX(0.850);">22</span>
<div style="left:134.5px;top:124.6px;width:90.5px;height:1.8px;background:#35794f;"></div>
<div style="left:12px;top:137.87px;width:1.2px;height:11.87px;background:#2e7a4e;"></div>
<div style="left:13.5px;top:126.5px;width:88.5px;height:11.069999999999999px;background:#a9d08e;"></div>
<div style="left:135px;top:126.5px;width:90px;height:11.069999999999999px;background:#a9d08e;"></div>
<span style="left:15px;top:128.66px;font-size:8.3px;line-height:9.54px;color:#1e1e1e;transform:scaleX(0.810);">3A Percentage Score</span>
<span style="left:137px;top:128.66px;font-size:8.3px;line-height:9.54px;color:#1e1e1e;transform:scaleX(0.808);">Result</span>
<span style="left:88px;top:140.53px;font-size:8.3px;line-height:9.54px;color:#222222;transform:scaleX(0.752);">25%</span>
<span style="left:88px;top:152.41px;font-size:8.3px;line-height:9.54px;color:#222222;transform:scaleX(0.752);">30%</span>
<span style="left:88px;top:164.27px;font-size:8.3px;line-height:9.54px;color:#222222;transform:scaleX(0.752);">40%</span>
<span style="left:88px;top:176.14px;font-size:8.3px;line-height:9.54px;color:#222222;transform:scaleX(0.752);">53%</span>
<span style="left:88px;top:188.01px;font-size:8.3px;line-height:9.54px;color:#222222;transform:scaleX(0.752);">64%</span>
<span style="left:88px;top:199.88px;font-size:8.3px;line-height:9.54px;color:#222222;transform:scaleX(0.752);">77%</span>
<span style="left:88px;top:211.75px;font-size:8.3px;line-height:9.54px;color:#222222;transform:scaleX(0.752);">81%</span>
<span style="left:88px;top:223.62px;font-size:8.3px;line-height:9.54px;color:#222222;transform:scaleX(0.752);">90%</span>
<span style="left:88px;top:235.49px;font-size:8.3px;line-height:9.54px;color:#222222;transform:scaleX(0.752);">94%</span>
<div style="left:134px;top:137.37px;width:91.5px;height:12.87px;background:transparent;border:1px solid #2f6b4a;border-right:none;"></div>
<div style="left:224px;top:148.74px;width:2.4px;height:2.4px;background:#2f6b4a;"></div>
<span style="left:136.8px;top:140.11px;font-size:8px;line-height:9.2px;color:#333333;transform:scaleX(0.728);">=</span>
<div style="left:689.3px;top:115px;width:10.7px;height:267px;background:#222222;"></div>
<div style="left:691.6px;top:116.5px;width:6.4px;height:259px;background:#333333;"></div>
<div style="left:691.6px;top:124px;width:6.4px;height:235.5px;background:#474747;"></div>
<div style="left:691.6px;top:116.5px;width:6.4px;height:7.5px;background:#595959;"></div>
<svg style="left:692.5px;top:118.8px" width="5" height="3" viewBox="0 0 5 3"><path d="M0.3 2.8l2.2-2.4 2.2 2.4z" fill="#b0b0b0"/></svg>
<div style="left:691.6px;top:375.3px;width:6.4px;height:6px;background:#555555;"></div>
<svg style="left:692.5px;top:377px" width="5" height="3" viewBox="0 0 5 3"><path d="M0.3 0.3l2.2 2.4 2.2-2.4z" fill="#e0e0e0"/></svg>
<!-- s4_bottom.py -->
<div style="left:0px;top:382px;width:700px;height:15.5px;background:#212121;"></div>
<svg style="left:13.5px;top:387.5px" width="3" height="5" viewBox="0 0 3 5"><path d="M2.7 0.3v4.4l-2.4-2.2z" fill="#9a9a9a"/></svg>
<svg style="left:27.5px;top:387.5px" width="3" height="5" viewBox="0 0 3 5"><path d="M0.3 0.3v4.4l2.4-2.2z" fill="#9a9a9a"/></svg>
<div style="left:51px;top:382px;width:33.5px;height:14px;background:#f4f4f4;"></div>
<div style="left:51px;top:394.8px;width:33.5px;height:1.4px;background:#217346;"></div>
<span style="left:57px;top:385.29px;font-size:7.5px;line-height:8.62px;color:#1e7145;font-weight:bold;transform:scaleX(0.894);">Sheet1</span>
<svg style="left:101px;top:385.5px" width="9" height="9" viewBox="0 0 9 9"><circle cx="4.5" cy="4.5" r="3.8" fill="none" stroke="#c8c8c8" stroke-width="0.8"/><path d="M4.5 2.4v4.2 M2.4 4.5h4.2" stroke="#c8c8c8" stroke-width="0.8"/></svg>
<div style="left:419.5px;top:386.5px;width:1.2px;height:1.2px;background:#c8c8c8;"></div>
<div style="left:419.5px;top:389.3px;width:1.2px;height:1.2px;background:#c8c8c8;"></div>
<div style="left:419.5px;top:392px;width:1.2px;height:1.2px;background:#c8c8c8;"></div>
<div style="left:428.5px;top:386.5px;width:236.5px;height:7.3px;background:#474747;"></div>
<div style="left:428.5px;top:386.5px;width:7.5px;height:7.3px;background:#606060;"></div>
<svg style="left:430.7px;top:388.2px" width="3" height="4" viewBox="0 0 3 4"><path d="M2.6 0.3v3.4l-2.2-1.7z" fill="#1c1c1c"/></svg>
<div style="left:665px;top:386.5px;width:6px;height:7.3px;background:#333;"></div>
<div style="left:682.5px;top:386.5px;width:6px;height:7.3px;background:#5a5a5a;"></div>
<svg style="left:684.2px;top:388.2px" width="3" height="4" viewBox="0 0 3 4"><path d="M0.4 0.3v3.4l2.2-1.7z" fill="#c0c0c0"/></svg>
<div style="left:689px;top:382px;width:11px;height:15.5px;background:#212121;"></div>
<div style="left:0px;top:397.5px;width:700px;height:13px;background:#2d2d2d;"></div>
<span style="left:4px;top:400.28px;font-size:7px;line-height:8.05px;color:#e6e6e6;transform:scaleX(0.870);">Edit</span>
<svg style="left:29.5px;top:400.5px" width="8" height="8" viewBox="0 0 8 8"><rect x="0.5" y="0.5" width="7" height="7" fill="none" stroke="#c0c0c0" stroke-width="0.8"/><path d="M0.5 3h7 M3 0.5v7" stroke="#c0c0c0" stroke-width="0.6"/><circle cx="5.4" cy="5.4" r="1.3" fill="none" stroke="#c0c0c0" stroke-width="0.6"/></svg>
<svg style="left:553px;top:401px" width="7" height="7" viewBox="0 0 7 7"><path d="M0.5 0.5h6v6h-6z M0.5 2.5h6 M0.5 4.5h6 M2.5 0.5v6 M4.5 0.5v6" stroke="#5e5e5e" stroke-width="0.7" fill="none"/></svg>
<svg style="left:573px;top:401px" width="7" height="7" viewBox="0 0 7 7"><path d="M0.5 0.5h6v6h-6z M2 0.5v6 M5 0.5v6" stroke="#5e5e5e" stroke-width="0.7" fill="none"/></svg>
<svg style="left:593.5px;top:401px" width="7" height="7" viewBox="0 0 7 7"><path d="M0.5 0.5h6v6h-6z M0.5 3h3v-2.5" stroke="#5e5e5e" stroke-width="0.7" fill="none"/></svg>
<div style="left:610.5px;top:404px;width:4px;height:0.9px;background:#8a8a8a;"></div>
<div style="left:617px;top:404px;width:49px;height:0.9px;background:#a0a0a0;"></div>
<div style="left:641px;top:401.5px;width:1.4px;height:6px;background:#c0c0c0;"></div>
<div style="left:668px;top:404px;width:4px;height:0.9px;background:#8a8a8a;"></div>
<div style="left:669.6px;top:402.4px;width:0.9px;height:4px;background:#8a8a8a;"></div>
<span style="left:689px;top:400.48px;font-size:7px;line-height:8.05px;color:#6a6a6a;transform:scaleX(1.446);">%</span>
<div style="left:0px;top:410px;width:700px;height:5px;background:linear-gradient(90deg,#0f2a50 0px,#0f2a50 34px,#6d869f 35px,#6d869f 64px,#102a4c 65px,#102a4c 79px,#7a4a6a 80px,#7a4a6a 84px,#102a4c 85px,#102a4c 108px,#2aa0b8 110px,#2aa0b8 117px,#102a4c 119px,#142c4e 129px,#7f93ad 131px,#7f93ad 145px,#b4c0d4 147px,#aab6cc 188px,#6f86b0 190px,#6f86b0 224px,#4a64a8 226px,#4a64a8 254px,#b4bcd2 256px,#b4bcd2 286px,#4858a8 288px,#4858a8 319px,#d0d2dc 321px,#d0d2dc 340px,#2a2a3c 341px,#2a2a3c 349px,#7a8ac0 351px,#7080bc 384px,#4a48a0 388px,#4e4ca2 498px,#8890b8 502px,#98a4c0 524px,#a8b4cc 526px,#a8b4cc 554px,#2a4058 556px,#2a4058 700px);"></div>
<div style="left:0px;top:410px;width:700px;height:1.4px;background:#141414;"></div>
<span style="left:627px;top:396.81px;font-size:11.8px;line-height:13.57px;color:#0c0c0c;transform:scaleX(1.034);-webkit-text-stroke:0.55px #0c0c0c;">wsxdn.com</span>
<!-- s5_dialog.py -->
<div style="left:270px;top:106px;width:226px;height:225px;background:rgba(60,90,130,0.10);"></div>
<div style="left:272px;top:107px;width:222px;height:222px;background:#6ea7de;border:0.5px solid #5b8fc6;"></div>
<div style="left:276px;top:125.5px;width:213.5px;height:199.5px;background:#f0f0f0;"></div>
<span style="left:357.8px;top:111.42px;font-size:9px;line-height:10.35px;color:#1c2e48;transform:scaleX(0.826);">Insert Function</span>
<span style="left:457.6px;top:108.83px;font-size:9px;line-height:10.35px;color:#14264a;font-weight:bold;transform:scaleX(0.728);">?</span>
<div style="left:467px;top:107.5px;width:22.5px;height:12px;background:#c9514f;"></div>
<svg style="left:475.5px;top:111px" width="6" height="6" viewBox="0 0 6 6"><path d="M0.8 0.8l4.4 4.4 M5.2 0.8l-4.4 4.4" stroke="#ffffff" stroke-width="1.1" fill="none"/></svg>
<span style="left:279px;top:129.75px;font-size:7.4px;line-height:8.51px;color:#1a1a1a;transform:scaleX(0.799);-webkit-text-stroke:0.22px #1a1a1a;">Search for a function:</span>
<div style="left:279px;top:137.3px;width:3.6px;height:0.6px;background:#1a1a1a;"></div>
<div style="left:283px;top:141.5px;width:160px;height:18.5px;background:#ffffff;border:1px solid #bebebe;"></div>
<span style="left:285.4px;top:143.25px;font-size:7.4px;line-height:8.51px;color:#1a1a1a;transform:scaleX(0.822);-webkit-text-stroke:0.22px #1a1a1a;">Type a brief description of what you want to do and then</span>
<span style="left:285.4px;top:151.15px;font-size:7.4px;line-height:8.51px;color:#1a1a1a;transform:scaleX(0.783);-webkit-text-stroke:0.22px #1a1a1a;">click Go</span>
<div style="left:448px;top:141.2px;width:38px;height:13.5px;background:linear-gradient(#f2f2f2,#e4e4e4);border:1px solid #adadad;"></div>
<span style="left:462.6px;top:143.75px;font-size:7.4px;line-height:8.51px;color:#1a1a1a;transform:scaleX(0.750);-webkit-text-stroke:0.22px #1a1a1a;">Go</span>
<div style="left:462.6px;top:151.6px;width:4px;height:0.6px;background:#1a1a1a;"></div>
<span style="left:283.7px;top:165.25px;font-size:7.4px;line-height:8.51px;color:#1a1a1a;transform:scaleX(0.766);-webkit-text-stroke:0.22px #1a1a1a;">Or select a category:</span>
<div style="left:338px;top:162px;width:104.5px;height:13px;background:#ffffff;border:1px solid #b4b4b4;"></div>
<span style="left:340.5px;top:165.25px;font-size:7.4px;line-height:8.51px;color:#1a1a1a;transform:scaleX(0.774);-webkit-text-stroke:0.22px #1a1a1a;">Statistical</span>
<div style="left:434.3px;top:162.3px;width:8px;height:12.4px;background:#e6e6e6;border:1px solid #a0a0a0;"></div>
<svg style="left:436px;top:167px" width="5" height="4" viewBox="0 0 5 4"><path d="M0.5 0.6l2 2.2 2-2.2" stroke="#333" stroke-width="1" fill="none"/></svg>
<span style="left:279px;top:180.84px;font-size:7.4px;line-height:8.51px;color:#1a1a1a;transform:scaleX(0.784);-webkit-text-stroke:0.22px #1a1a1a;">Select a function:</span>
<div style="left:320px;top:188.6px;width:2.6px;height:0.6px;background:#1a1a1a;"></div>
<div style="left:283.4px;top:191.7px;width:202.9px;height:56.5px;background:#ffffff;border:1px solid #a8a8a8;"></div>
<div style="left:284.4px;top:200.9px;width:192px;height:7.1px;background:#3897f0;"></div>
<span style="left:285.8px;top:193.15px;font-size:7.4px;line-height:8.51px;color:#111111;transform:scaleX(0.683);-webkit-text-stroke:0.22px #1a1a1a;">PEARSON</span>
<span style="left:285.8px;top:200.80px;font-size:7.4px;line-height:8.51px;color:#ffffff;transform:scaleX(0.639);-webkit-text-stroke:0.2px #ffffff;">PERCENTILE.EXC</span>
<span style="left:285.8px;top:208.45px;font-size:7.4px;line-height:8.51px;color:#111111;transform:scaleX(0.656);-webkit-text-stroke:0.22px #1a1a1a;">PERCENTILE.INC</span>
<span style="left:285.8px;top:216.10px;font-size:7.4px;line-height:8.51px;color:#111111;transform:scaleX(0.659);-webkit-text-stroke:0.22px #1a1a1a;">PERCENTRANK.EXC</span>
<span style="left:285.8px;top:223.75px;font-size:7.4px;line-height:8.51px;color:#111111;transform:scaleX(0.667);-webkit-text-stroke:0.22px #1a1a1a;">PERCENTRANK.INC</span>
<span style="left:285.8px;top:231.40px;font-size:7.4px;line-height:8.51px;color:#111111;transform:scaleX(0.662);-webkit-text-stroke:0.22px #1a1a1a;">PERMUT</span>
<span style="left:285.8px;top:239.05px;font-size:7.4px;line-height:8.51px;color:#111111;transform:scaleX(0.705);-webkit-text-stroke:0.22px #1a1a1a;">PERMUTATIONA</span>
<div style="left:476.5px;top:192.5px;width:9px;height:54px;background:#f4f4f4;"></div>
<svg style="left:478.5px;top:196px" width="5" height="4" viewBox="0 0 5 4"><path d="M0.5 3.2l2-2.4 2 2.4" stroke="#444" stroke-width="1" fill="none"/></svg>
<svg style="left:478.5px;top:240px" width="5" height="4" viewBox="0 0 5 4"><path d="M0.5 0.6l2 2.4 2-2.4" stroke="#444" stroke-width="1" fill="none"/></svg>
<div style="left:477.3px;top:219.8px;width:7.4px;height:9px;background:#c4c4c4;"></div>
<span style="left:283.7px;top:249.94px;font-size:7.4px;line-height:8.51px;color:#111111;font-weight:bold;transform:scaleX(0.704);">PERCENTILE.EXC(array,k)</span>
<span style="left:283.7px;top:259.85px;font-size:7.4px;line-height:8.51px;color:#1a1a1a;transform:scaleX(0.803);-webkit-text-stroke:0.22px #1a1a1a;">Returns the k-th percentile of values in a range, where k is in the range 0..1,</span>
<span style="left:283.7px;top:268.05px;font-size:7.4px;line-height:8.51px;color:#1a1a1a;transform:scaleX(0.733);-webkit-text-stroke:0.22px #1a1a1a;">exclusive.</span>
<div style="left:279px;top:298px;width:208px;height:0.8px;background:#e4e4e4;"></div>
<span style="left:279px;top:308.94px;font-size:7.4px;line-height:8.51px;color:#2f5f94;transform:scaleX(0.838);text-decoration:underline;text-decoration-thickness:0.6px;text-underline-offset:0.8px;">Help on this function</span>
<div style="left:405px;top:307.3px;width:38.3px;height:13px;background:linear-gradient(#f0f4f9,#dde6f0);border:1px solid #5aa2e8;"></div>
<span style="left:420px;top:309.75px;font-size:7.4px;line-height:8.51px;color:#1a1a1a;transform:scaleX(0.748);-webkit-text-stroke:0.22px #1a1a1a;">OK</span>
<div style="left:448.3px;top:307.5px;width:37px;height:12.5px;background:linear-gradient(#f2f2f2,#e2e2e2);border:1px solid #adadad;"></div>
<span style="left:457.8px;top:309.75px;font-size:7.4px;line-height:8.51px;color:#1a1a1a;transform:scaleX(0.773);-webkit-text-stroke:0.22px #1a1a1a;">Cancel</span>
<!-- s6_arrows.py -->
<svg style="left:0px;top:0px" width="700" height="415" viewBox="0 0 700 415"><g style="filter:drop-shadow(0.5px 0.9px 0.7px rgba(60,0,0,0.45))"><path d="M284.2 29.2L132.8 81.8L134.6 86.7L285.4 32.4z" fill="#ee1419"/><circle cx="284.8" cy="30.8" r="1.65" fill="#ee1419"/><path d="M121.8 88.2L133.8 78.3L137.3 89.7z" fill="#ee1419" stroke="#ee1419" stroke-width="0.6" stroke-linejoin="round"/><path d="M577.5 122.5L451.6 163.0L452.6 166.3L578.3 124.7z" fill="#d6181e"/><circle cx="577.9" cy="123.6" r="1.2" fill="#d6181e"/><path d="M439.6 168.6L451.4 160L455.3 171z" fill="#d6181e" stroke="#d6181e" stroke-width="0.6" stroke-linejoin="round"/><path d="M157.3 309.4L275.8 213.6L272.9 210.1L155.7 307.6z" fill="#d6181e"/><circle cx="156.5" cy="308.5" r="1.2" fill="#d6181e"/><path d="M283.9 204.5L270.1 209.3L276.2 217z" fill="#d6181e" stroke="#d6181e" stroke-width="0.6" stroke-linejoin="round"/><path d="M580.9 225.7L439.8 307.7L441.7 311.0L582.1 227.5z" fill="#d6181e"/><circle cx="581.5" cy="226.6" r="1.1" fill="#d6181e"/><path d="M429.6 316L439.8 304.5L444.9 313.6z" fill="#d6181e" stroke="#d6181e" stroke-width="0.6" stroke-linejoin="round"/></g></svg></div></body></html>
